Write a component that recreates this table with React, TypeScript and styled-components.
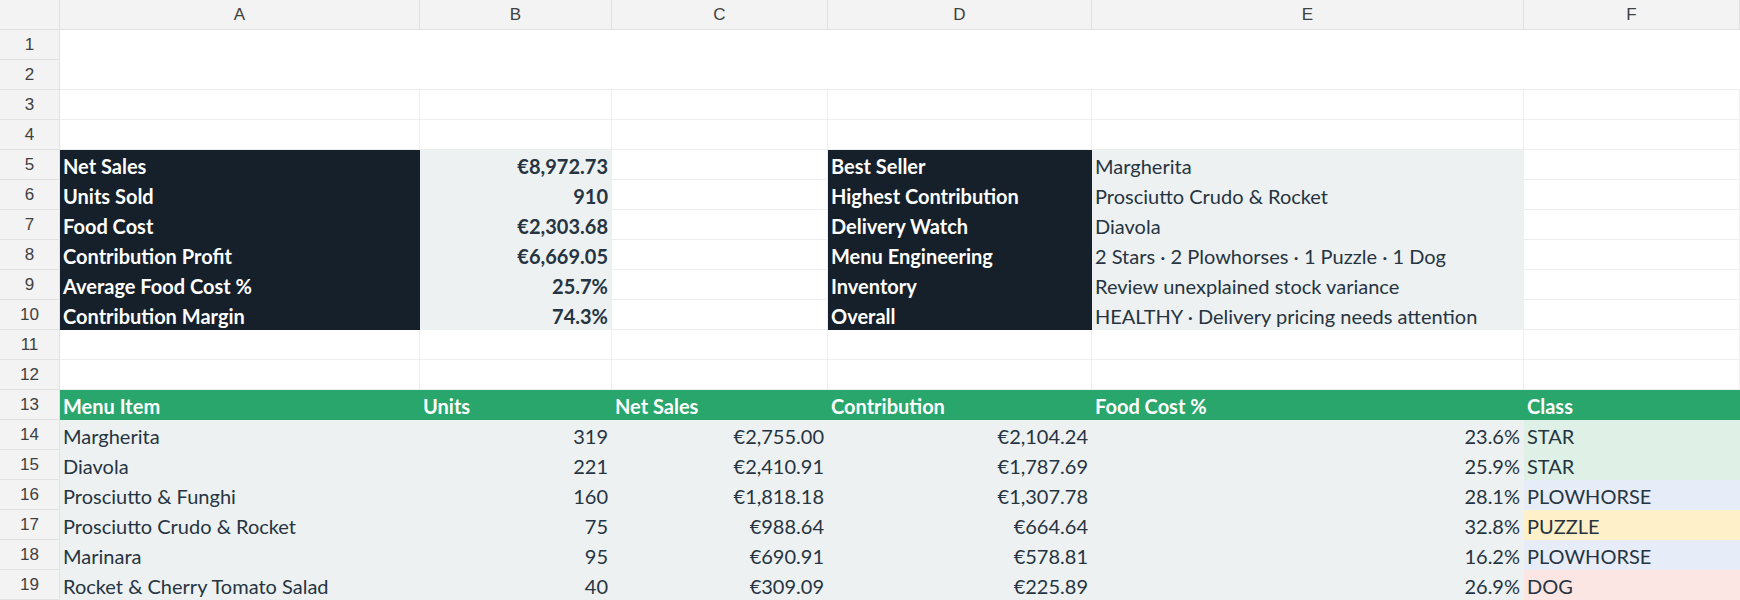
import * as React from 'react';
import styled, { createGlobalStyle } from 'styled-components';

type Tone = 'plain' | 'dark' | 'soft' | 'green' | 'star' | 'plow' | 'puzzle' | 'dog';

interface CellSpec {
    text?: string;
    tone?: Tone;
    right?: boolean;
    bold?: boolean;
}

const COLUMNS = ['A', 'B', 'C', 'D', 'E', 'F'];
const WIDTHS = [360, 192, 216, 264, 432, 216];

const FILLS: Record<Tone, string> = {
    plain: '#ffffff',
    dark: '#16202a',
    soft: '#edf1f2',
    green: '#28a66b',
    star: '#dff1e6',
    plow: '#e6ecf8',
    puzzle: '#fef0c9',
    dog: '#fbe6e4'
};

const GlobalStyle = createGlobalStyle`
    html, body {
        margin: 0;
        padding: 0;
        background: #ffffff;
    }
`;

const Sheet = styled.div`
    display: grid;
    grid-template-columns: 60px ${WIDTHS.map(w => `${w}px`).join(' ')};
    grid-auto-rows: 30px;
    width: 1740px;
    font-family: Lato, 'Open Sans', sans-serif;
    color: #263441;
    overflow: hidden;
`;

const HeaderBox = styled.div`
    box-sizing: border-box;
    display: flex;
    align-items: center;
    justify-content: center;
    background: #f3f3f3;
    border-right: 1px solid #e1e1e1;
    border-bottom: 1px solid #e1e1e1;
    font-family: 'Liberation Sans', Arial, sans-serif;
    font-size: 17px;
    color: #404040;
`;

const Merged = styled.div`
    box-sizing: border-box;
    grid-column: span 6;
    grid-row: span 2;
    border-bottom: 1px solid #eeeeee;
`;

const Cell = styled.div<{ $tone: Tone; $right: boolean; $bold: boolean }>`
    box-sizing: border-box;
    padding: 3px 3px 0;
    line-height: 26px;
    font-size: 20px;
    white-space: nowrap;
    overflow: hidden;
    text-align: ${p => (p.$right ? 'right' : 'left')};
    font-weight: ${p => (p.$bold ? 700 : 400)};
    background: ${p => FILLS[p.$tone]};
    color: ${p => (p.$tone === 'dark' || p.$tone === 'green' ? '#ffffff' : '#263441')};
    border-right: 1px solid ${p => (p.$tone === 'plain' ? '#eeeeee' : FILLS[p.$tone])};
    border-bottom: 1px solid ${p => (p.$tone === 'plain' ? '#eeeeee' : FILLS[p.$tone])};
`;

const empty: CellSpec[] = COLUMNS.map(() => ({}));

const summary: [string, string, string, string][] = [
    ['Net Sales', '€8,972.73', 'Best Seller', 'Margherita'],
    ['Units Sold', '910', 'Highest Contribution', 'Prosciutto Crudo & Rocket'],
    ['Food Cost', '€2,303.68', 'Delivery Watch', 'Diavola'],
    ['Contribution Profit', '€6,669.05', 'Menu Engineering', '2 Stars · 2 Plowhorses · 1 Puzzle · 1 Dog'],
    ['Average Food Cost %', '25.7%', 'Inventory', 'Review unexplained stock variance'],
    ['Contribution Margin', '74.3%', 'Overall', 'HEALTHY · Delivery pricing needs attention']
];

const menu: [string, string, string, string, string, string, Tone][] = [
    ['Margherita', '319', '€2,755.00', '€2,104.24', '23.6%', 'STAR', 'star'],
    ['Diavola', '221', '€2,410.91', '€1,787.69', '25.9%', 'STAR', 'star'],
    ['Prosciutto & Funghi', '160', '€1,818.18', '€1,307.78', '28.1%', 'PLOWHORSE', 'plow'],
    ['Prosciutto Crudo & Rocket', '75', '€988.64', '€664.64', '32.8%', 'PUZZLE', 'puzzle'],
    ['Marinara', '95', '€690.91', '€578.81', '16.2%', 'PLOWHORSE', 'plow'],
    ['Rocket & Cherry Tomato Salad', '40', '€309.09', '€225.89', '26.9%', 'DOG', 'dog']
];

// rows 3 to 19; rows 1-2 are one merged empty block
const rows: CellSpec[][] = [
    empty,
    empty,
    ...summary.map(([label, value, note, detail]) => [
        { text: label, tone: 'dark' as Tone, bold: true },
        { text: value, tone: 'soft' as Tone, right: true, bold: true },
        {},
        { text: note, tone: 'dark' as Tone, bold: true },
        { text: detail, tone: 'soft' as Tone },
        {}
    ]),
    empty,
    empty,
    ['Menu Item', 'Units', 'Net Sales', 'Contribution', 'Food Cost %', 'Class'].map(text => ({
        text,
        tone: 'green' as Tone,
        bold: true
    })),
    ...menu.map(([name, units, net, contrib, cost, cls, tone]) => [
        { text: name, tone: 'soft' as Tone },
        { text: units, tone: 'soft' as Tone, right: true },
        { text: net, tone: 'soft' as Tone, right: true },
        { text: contrib, tone: 'soft' as Tone, right: true },
        { text: cost, tone: 'soft' as Tone, right: true },
        { text: cls, tone }
    ])
];

export default function App() {
    return (
        <>
            <GlobalStyle />
            <Sheet>
                <HeaderBox />
                {COLUMNS.map(col => (
                    <HeaderBox key={col}>{col}</HeaderBox>
                ))}
                <HeaderBox>1</HeaderBox>
                <Merged />
                <HeaderBox>2</HeaderBox>
                {rows.map((row, i) => (
                    <React.Fragment key={i}>
                        <HeaderBox>{i + 3}</HeaderBox>
                        {row.map((cell, j) => (
                            <Cell
                                key={j}
                                $tone={cell.tone ?? 'plain'}
                                $right={Boolean(cell.right)}
                                $bold={Boolean(cell.bold)}
                            >
                                {cell.text}
                            </Cell>
                        ))}
                    </React.Fragment>
                ))}
            </Sheet>
        </>
    );
}
